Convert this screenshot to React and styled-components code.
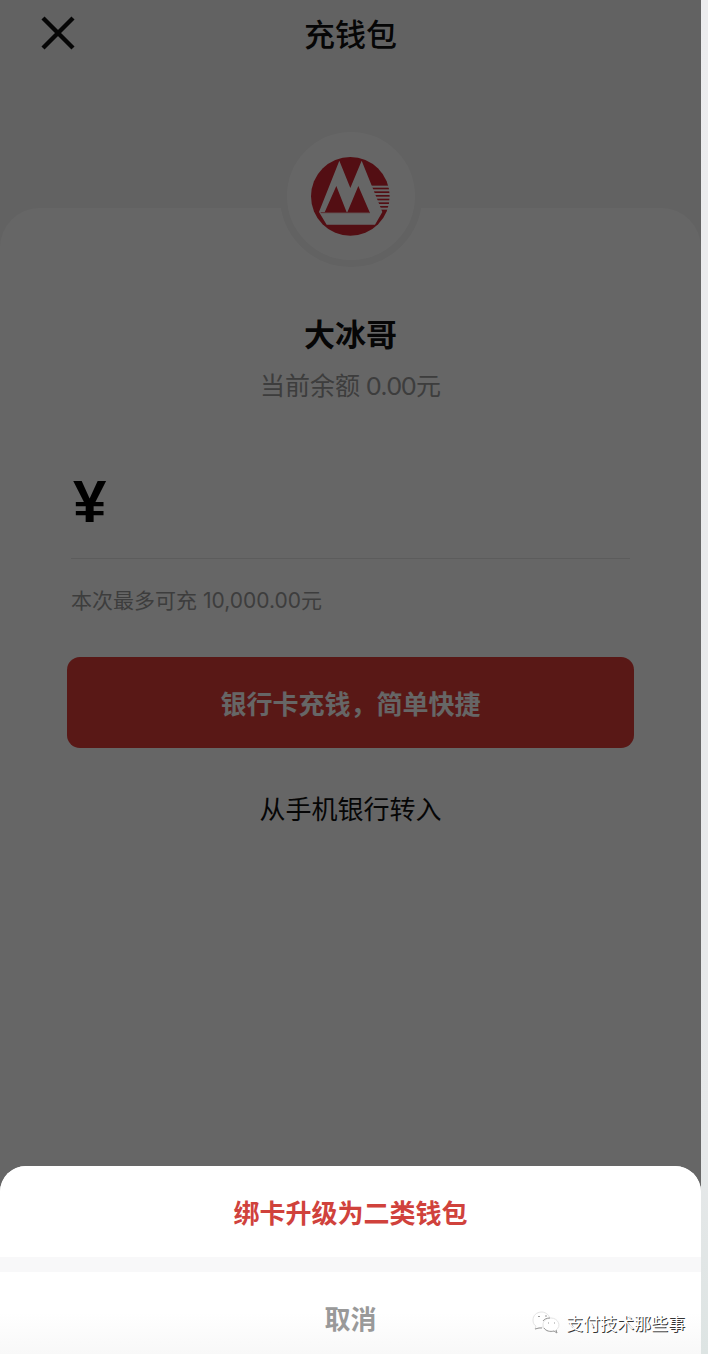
import React from "react";
import styled, { createGlobalStyle, css } from "styled-components";

const GlobalStyle = createGlobalStyle`
  *, *::before, *::after { box-sizing: border-box; }
  body {
    margin: 0;
    font-family: "Noto Sans CJK SC", "Noto Sans", sans-serif;
    color: #111;
  }
  button, input { font: inherit; color: inherit; }
`;

const Page = styled.div`
  display: grid;
  grid-template-columns: 1fr 7px;
  min-height: 100vh;
  background: linear-gradient(#ececee, #e6e8e9 85%, #dde4e3);
`;

const Phone = styled.div`
  position: relative;
  display: flex;
  flex-direction: column;
  background: #f6f6f6;
  overflow: hidden;
`;

const Header = styled.header`
  display: grid;
  grid-template-columns: 48px 1fr 48px;
  align-items: center;
  height: 66px;
  padding: 0 34px;
`;

const IconButton = styled.button`
  display: grid;
  place-items: center;
  width: 48px;
  height: 48px;
  padding: 0;
  border: 0;
  background: none;
`;

const Title = styled.h1`
  margin: 0;
  font-size: 31px;
  line-height: 48px;
  font-weight: 500;
  text-align: center;
`;

const Card = styled.main`
  flex: 1;
  display: flex;
  flex-direction: column;
  align-items: center;
  margin-top: 142px;
  padding: 0 67px 240px;
  border-radius: 40px 40px 0 0;
  background: #fff;
`;

const Avatar = styled.div`
  display: grid;
  place-items: center;
  width: 142px;
  height: 142px;
  margin-top: -83px;
  border: 7px solid #f4f4f4;
  border-radius: 50%;
  background: #fff;
`;

const Name = styled.h2`
  margin: 42px 0 0;
  font-size: 31px;
  line-height: 48px;
  font-weight: 700;
`;

const Balance = styled.p`
  margin: 8px 0 0;
  font-family: Lato, "Noto Sans CJK SC", sans-serif;
  font-size: 25px;
  line-height: 40px;
  color: #999;
`;

const AmountField = styled.label`
  display: flex;
  align-items: center;
  align-self: stretch;
  height: 118px;
  margin: 36px 4px 0;
  padding: 4px 0 0 2px;
  border-bottom: 1px solid #e6e6e6;
  font-family: "Liberation Sans", "Noto Sans CJK SC", sans-serif;
  font-size: 60px;
  font-weight: 700;
  color: #000;
`;

const AmountInput = styled.input`
  flex: 1;
  min-width: 0;
  padding: 0 16px;
  border: 0;
  outline: 0;
  background: none;
`;

const Hint = styled.p`
  align-self: stretch;
  margin: 26px 4px 0;
  font-family: Inter, "Noto Sans CJK SC", sans-serif;
  font-size: 21px;
  line-height: 32px;
  color: #999;
`;

const PrimaryButton = styled.button`
  align-self: stretch;
  height: 91px;
  margin-top: 40px;
  border: 0;
  border-radius: 13px;
  background: #de3c38;
  color: #fff;
  font-size: 26px;
  font-weight: 700;
`;

const TextButton = styled.button`
  margin-top: 40px;
  padding: 0;
  border: 0;
  background: none;
  font-size: 26px;
  line-height: 40px;
`;

const Scrim = styled.div`
  position: absolute;
  inset: 0;
  display: flex;
  flex-direction: column;
  justify-content: flex-end;
  background: rgba(0, 0, 0, 0.6);
`;

const Sheet = styled.div`
  display: flex;
  flex-direction: column;
  gap: 15px;
  border-radius: 26px 26px 0 0;
  background: #f8f8f9;
  overflow: hidden;
`;

const SheetAction = styled.button`
  height: 91px;
  padding: 0;
  border: 0;
  background: #fff;
  font-size: 26px;
  font-weight: 700;
  color: #d0423c;
  ${({ $muted }) =>
    $muted &&
    css`
      background: linear-gradient(#fff 50%, #f8f8f8);
      height: 82px;
      padding-top: 9px;
      color: #999;
    `}
`;

const Watermark = styled.div`
  position: absolute;
  right: 23px;
  bottom: 18px;
  display: flex;
  align-items: center;
  gap: 6px;
  font-size: 17px;
  line-height: 26px;
  color: #fff;
  text-shadow: 1px 1px 0 #333;
`;

const stripes = [197, 208, 219, 230, 241, 252, 263];

const Logo = () => (
  <svg width="79" height="79" viewBox="123 111 237 237" role="img" aria-label="招商银行">
    <circle cx="241" cy="229" r="118" fill="#d02530" />
    {stripes.map((y) => (
      <rect key={y} x="296" y={y} width="66" height="6" fill="#fff" />
    ))}
    <path
      fill="#fff"
      d="M208 122 L241 204 L275 122 L337 276 L315 314 H170 L147 276 Z"
    />
    <path fill="#d02530" d="M199 198 L230 277 H164 Z M265 198 L299 277 H232 Z" />
    <path d="M152 278 H300" stroke="#d02530" strokeWidth="2" />
  </svg>
);

const CloseIcon = () => (
  <svg width="34" height="34" viewBox="0 0 34 34" aria-hidden="true">
    <path d="M2 2 L32 32 M32 2 L2 32" stroke="#111" strokeWidth="4.400" />
  </svg>
);

const ChatIcon = () => (
  <svg width="28" height="24" viewBox="0 0 28 24" fill="#fff" aria-hidden="true">
    <g stroke="#e4e4e4">
      <path d="M10 1 C4 1 1 5 1 9 C1 12 2 14 4 15 L3 18 L7 17 L11 16 C21 15 20 2 10 1 Z" />
      <path d="M19 7 C14 7 11 10 11 14 C11 19 17 22 22 20 L25 22 L24 19 C30 15 26 7 19 7 Z" />
    </g>
    <path
      d="M3 18 L7 17 H10 M11 10 C12 8 15 7 18 7 M12 17 C14 20 18 21 22 20 L25 22 L24 19 M6 6 L7 5 L8 6 M13 5 H15 M16 12 H17 M22 12 H23"
      fill="none"
      stroke="#999"
    />
  </svg>
);

export default function App() {
  return (
    <>
      <GlobalStyle />
      <Page>
        <Phone>
          <Header>
            <IconButton type="button" aria-label="关闭">
              <CloseIcon />
            </IconButton>
            <Title>充钱包</Title>
          </Header>
          <Card>
            <Avatar>
              <Logo />
            </Avatar>
            <Name>大冰哥</Name>
            <Balance>当前余额 0.00元</Balance>
            <AmountField>
              ¥
              <AmountInput inputMode="decimal" aria-label="充值金额" />
            </AmountField>
            <Hint>本次最多可充 10,000.00元</Hint>
            <PrimaryButton type="button">银行卡充钱，简单快捷</PrimaryButton>
            <TextButton type="button">从手机银行转入</TextButton>
          </Card>
          <Scrim>
            <Sheet role="dialog" aria-label="充值方式">
              <SheetAction type="button">绑卡升级为二类钱包</SheetAction>
              <SheetAction type="button" $muted>
                取消
              </SheetAction>
            </Sheet>
          </Scrim>
        </Phone>
        <Watermark>
          <ChatIcon />
          支付技术那些事
        </Watermark>
      </Page>
    </>
  );
}
